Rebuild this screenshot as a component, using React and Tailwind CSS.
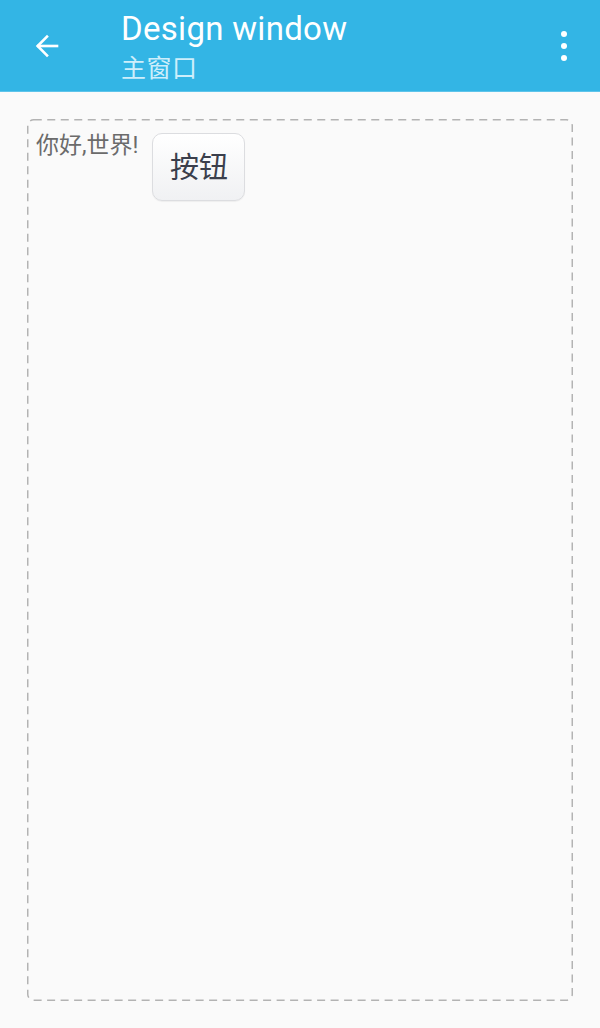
import React from "react";

export default function App() {
  return (
    <div
      className="w-[600px] h-[1028px] flex flex-col bg-[#fafafa]"
      style={{ fontFamily: 'Roboto, "Noto Sans CJK SC", sans-serif' }}
    >
      <header className="h-[92px] bg-[#33b5e5] flex items-center shrink-0 border-b border-[#5ec4ea]">
        <div className="w-[121px] h-full flex items-center pl-[32px]">
          <svg width="30" height="30" viewBox="0 0 24 24" fill="none" stroke="#fff" strokeWidth="2.1" strokeLinecap="square">
            <path d="M20 12H5" />
            <path d="M12 4.5L4.5 12L12 19.5" />
          </svg>
        </div>
        <div className="flex-1 h-full flex flex-col pt-[9px]">
          <div className="text-white text-[33px] leading-[40px] tracking-[0.3px]">Design window</div>
          <div className="text-[#cdeefb] text-[25px] leading-[34px] mt-[3px] tracking-[0.5px]">主窗口</div>
        </div>
        <div className="w-[60px] h-full flex flex-col items-center justify-center gap-[6px] pr-[12px]">
          <span className="w-[6px] h-[6px] rounded-full bg-white" />
          <span className="w-[6px] h-[6px] rounded-full bg-white" />
          <span className="w-[6px] h-[6px] rounded-full bg-white" />
        </div>
      </header>
      <main className="flex-1 pt-[27px] px-[27px] pb-[27px] flex">
        <div className="relative flex-1 flex items-start pl-[9px] pt-[13px] gap-[14px]">
          <svg className="absolute inset-0 w-full h-full pointer-events-none" preserveAspectRatio="none">
            <rect x="0.75" y="0.75" rx="6" ry="6" fill="none" stroke="#b3b3b3" strokeWidth="1.5" strokeDasharray="8 5.5" style={{ width: "calc(100% - 1.5px)", height: "calc(100% - 1.5px)" }} />
          </svg>
          <span className="text-[23px] leading-[28px] text-[#6b6b6b]">你好,世界!</span>
          <button className="mt-[1px] w-[93px] h-[68px] pt-[4px] rounded-[10px] border border-[#dcdde0] bg-gradient-to-b from-white to-[#f0f1f3] text-[29px] text-[#3b3f4c] flex items-center justify-center shadow-[0_1px_1px_rgba(0,0,0,0.05)]">
            按钮
          </button>
        </div>
      </main>
    </div>
  );
}
